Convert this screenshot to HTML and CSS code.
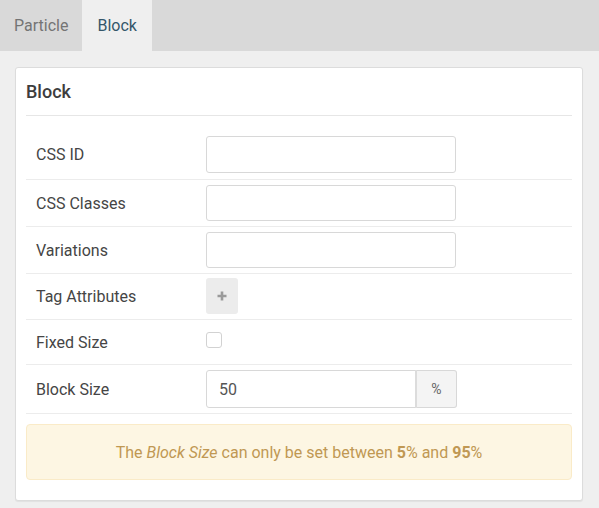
FILE: index.html
```html
<!DOCTYPE html>
<html>
<head>
<meta charset="utf-8">
<link rel="stylesheet" href="styles.css">
</head>
<body>
<div class="tabs">
  <div class="tab">Particle</div>
  <div class="tab tab-active">Block</div>
</div>
<div class="page">
  <div class="card">
    <div class="card-title">Block</div>
    <div class="fields">
      <div class="row row-first">
        <label class="label">CSS ID</label>
        <input class="text-input" type="text">
      </div>
      <div class="row">
        <label class="label">CSS Classes</label>
        <input class="text-input" type="text">
      </div>
      <div class="row">
        <label class="label">Variations</label>
        <input class="text-input" type="text">
      </div>
      <div class="row row-tag">
        <label class="label">Tag Attributes</label>
        <button class="add-btn" type="button">
          <svg width="10" height="10" viewBox="0 0 10 10"><path d="M5 0.5V9.5M0.5 5H9.5" stroke="#9a9a9a" stroke-width="2.6"/></svg>
        </button>
      </div>
      <div class="row row-check">
        <label class="label">Fixed Size</label>
        <span class="checkbox"></span>
      </div>
      <div class="row row-size">
        <label class="label">Block Size</label>
        <div class="input-group">
          <input class="size-input" type="text" value="50">
          <span class="addon">%</span>
        </div>
      </div>
    </div>
    <div class="alert">The <em>Block Size</em> can only be set between <strong>5</strong>% and <strong>95</strong>%</div>
  </div>
</div>
</body>
</html>
```
FILE: styles.css
```css
* { box-sizing: border-box; }
html, body {
  margin: 0;
  padding: 0;
  background: #efefef;
  font-family: Roboto, "Liberation Sans", sans-serif;
  color: #444;
}
.tabs {
  display: flex;
  height: 51px;
  background: #d9d9d9;
}
.tab {
  padding: 0 14px;
  font-size: 16px;
  line-height: 51px;
  color: #747474;
}
.tab-active {
  background: #efefef;
  color: #34566a;
  padding: 0 15px;
}
.page {
  padding: 16px 16px 8px 15px;
}
.card {
  background: #fff;
  border: 1px solid #dcdcdc;
  border-radius: 3px;
  box-shadow: 0 1px 1px rgba(0,0,0,0.06);
  padding: 0 10px 20px;
}
.card-title {
  height: 48px;
  line-height: 47px;
  border-bottom: 1px solid #e6e6e6;
  font-size: 18px;
  font-weight: 500;
  color: #3d3d3d;
}
.fields {
  padding-top: 15px;
}
.row {
  display: flex;
  align-items: center;
  padding: 5px 0 5px 10px;
  border-bottom: 1px solid #ececec;
}
.row-first {
  padding-bottom: 6px;
}
.row-first .text-input {
  height: 37px;
}
.label {
  width: 170px;
  font-size: 16px;
  color: #454545;
}
.text-input {
  width: 250px;
  height: 36px;
  border: 1px solid #d8d8d8;
  border-radius: 3px;
  background: #fff;
  outline: none;
  margin: 0;
}
.row-tag {
  padding-top: 4px;
}
.add-btn {
  width: 32px;
  height: 36px;
  border: none;
  border-radius: 3px;
  background: #ececec;
  padding: 0;
  margin: 0;
  display: flex;
  align-items: center;
  justify-content: center;
}
.row-check {
  height: 45px;
}
.checkbox {
  width: 16px;
  height: 16px;
  border: 1px solid #d2d2d2;
  border-radius: 3px;
  margin-top: -4px;
}
.input-group {
  display: flex;
  height: 38px;
}
.size-input {
  width: 210px;
  height: 38px;
  border: 1px solid #d8d8d8;
  border-radius: 3px 0 0 3px;
  padding: 0 12px;
  font-family: Roboto, "Liberation Sans", sans-serif;
  font-size: 16px;
  color: #555;
  outline: none;
  margin: 0;
}
.addon {
  width: 42px;
  height: 38px;
  border: 1px solid #d8d8d8;
  border-left: 2px solid #dcdcdc;
  border-radius: 0 3px 3px 0;
  background: #f4f4f4;
  display: flex;
  align-items: center;
  justify-content: center;
  font-size: 14px;
  color: #666;
  margin-left: -1px;
}
.alert {
  margin-top: 10px;
  height: 56px;
  border: 1px solid #faebc8;
  border-radius: 4px;
  background: #fdf6e3;
  color: #c09853;
  font-size: 16px;
  display: flex;
  align-items: center;
  justify-content: center;
}
.alert em {
  font-style: italic;
  margin: 0 4px;
}
.alert strong {
  font-weight: 700;
  margin-left: 4px;
}
```
